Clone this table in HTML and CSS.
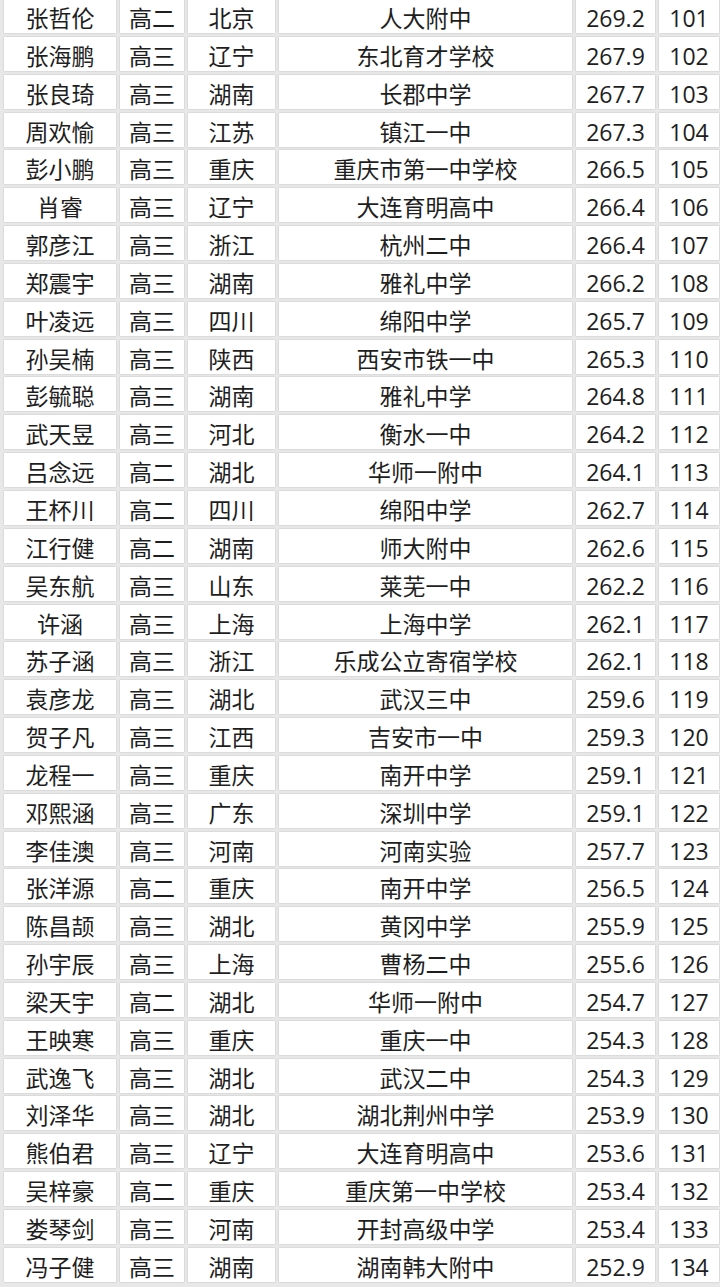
FILE: index.html
```html
<!DOCTYPE html>
<html lang="zh-CN">
<head>
<meta charset="utf-8">
<link rel="stylesheet" href="styles.css">
</head>
<body>
<div class="table">
<div class="row"><div class="c">张哲伦</div><div class="c">高二</div><div class="c">北京</div><div class="c">人大附中</div><div class="c">269.2</div><div class="c">101</div></div>
<div class="row"><div class="c">张海鹏</div><div class="c">高三</div><div class="c">辽宁</div><div class="c">东北育才学校</div><div class="c">267.9</div><div class="c">102</div></div>
<div class="row"><div class="c">张良琦</div><div class="c">高三</div><div class="c">湖南</div><div class="c">长郡中学</div><div class="c">267.7</div><div class="c">103</div></div>
<div class="row"><div class="c">周欢愉</div><div class="c">高三</div><div class="c">江苏</div><div class="c">镇江一中</div><div class="c">267.3</div><div class="c">104</div></div>
<div class="row"><div class="c">彭小鹏</div><div class="c">高三</div><div class="c">重庆</div><div class="c">重庆市第一中学校</div><div class="c">266.5</div><div class="c">105</div></div>
<div class="row"><div class="c">肖睿</div><div class="c">高三</div><div class="c">辽宁</div><div class="c">大连育明高中</div><div class="c">266.4</div><div class="c">106</div></div>
<div class="row"><div class="c">郭彦江</div><div class="c">高三</div><div class="c">浙江</div><div class="c">杭州二中</div><div class="c">266.4</div><div class="c">107</div></div>
<div class="row"><div class="c">郑震宇</div><div class="c">高三</div><div class="c">湖南</div><div class="c">雅礼中学</div><div class="c">266.2</div><div class="c">108</div></div>
<div class="row"><div class="c">叶凌远</div><div class="c">高三</div><div class="c">四川</div><div class="c">绵阳中学</div><div class="c">265.7</div><div class="c">109</div></div>
<div class="row"><div class="c">孙吴楠</div><div class="c">高三</div><div class="c">陕西</div><div class="c">西安市铁一中</div><div class="c">265.3</div><div class="c">110</div></div>
<div class="row"><div class="c">彭毓聪</div><div class="c">高三</div><div class="c">湖南</div><div class="c">雅礼中学</div><div class="c">264.8</div><div class="c">111</div></div>
<div class="row"><div class="c">武天昱</div><div class="c">高三</div><div class="c">河北</div><div class="c">衡水一中</div><div class="c">264.2</div><div class="c">112</div></div>
<div class="row"><div class="c">吕念远</div><div class="c">高二</div><div class="c">湖北</div><div class="c">华师一附中</div><div class="c">264.1</div><div class="c">113</div></div>
<div class="row"><div class="c">王杯川</div><div class="c">高二</div><div class="c">四川</div><div class="c">绵阳中学</div><div class="c">262.7</div><div class="c">114</div></div>
<div class="row"><div class="c">江行健</div><div class="c">高二</div><div class="c">湖南</div><div class="c">师大附中</div><div class="c">262.6</div><div class="c">115</div></div>
<div class="row"><div class="c">吴东航</div><div class="c">高三</div><div class="c">山东</div><div class="c">莱芜一中</div><div class="c">262.2</div><div class="c">116</div></div>
<div class="row"><div class="c">许涵</div><div class="c">高三</div><div class="c">上海</div><div class="c">上海中学</div><div class="c">262.1</div><div class="c">117</div></div>
<div class="row"><div class="c">苏子涵</div><div class="c">高三</div><div class="c">浙江</div><div class="c">乐成公立寄宿学校</div><div class="c">262.1</div><div class="c">118</div></div>
<div class="row"><div class="c">袁彦龙</div><div class="c">高三</div><div class="c">湖北</div><div class="c">武汉三中</div><div class="c">259.6</div><div class="c">119</div></div>
<div class="row"><div class="c">贺子凡</div><div class="c">高三</div><div class="c">江西</div><div class="c">吉安市一中</div><div class="c">259.3</div><div class="c">120</div></div>
<div class="row"><div class="c">龙程一</div><div class="c">高三</div><div class="c">重庆</div><div class="c">南开中学</div><div class="c">259.1</div><div class="c">121</div></div>
<div class="row"><div class="c">邓熙涵</div><div class="c">高三</div><div class="c">广东</div><div class="c">深圳中学</div><div class="c">259.1</div><div class="c">122</div></div>
<div class="row"><div class="c">李佳澳</div><div class="c">高三</div><div class="c">河南</div><div class="c">河南实验</div><div class="c">257.7</div><div class="c">123</div></div>
<div class="row"><div class="c">张洋源</div><div class="c">高二</div><div class="c">重庆</div><div class="c">南开中学</div><div class="c">256.5</div><div class="c">124</div></div>
<div class="row"><div class="c">陈昌颉</div><div class="c">高三</div><div class="c">湖北</div><div class="c">黄冈中学</div><div class="c">255.9</div><div class="c">125</div></div>
<div class="row"><div class="c">孙宇辰</div><div class="c">高三</div><div class="c">上海</div><div class="c">曹杨二中</div><div class="c">255.6</div><div class="c">126</div></div>
<div class="row"><div class="c">梁天宇</div><div class="c">高二</div><div class="c">湖北</div><div class="c">华师一附中</div><div class="c">254.7</div><div class="c">127</div></div>
<div class="row"><div class="c">王映寒</div><div class="c">高三</div><div class="c">重庆</div><div class="c">重庆一中</div><div class="c">254.3</div><div class="c">128</div></div>
<div class="row"><div class="c">武逸飞</div><div class="c">高三</div><div class="c">湖北</div><div class="c">武汉二中</div><div class="c">254.3</div><div class="c">129</div></div>
<div class="row"><div class="c">刘泽华</div><div class="c">高三</div><div class="c">湖北</div><div class="c">湖北荆州中学</div><div class="c">253.9</div><div class="c">130</div></div>
<div class="row"><div class="c">熊伯君</div><div class="c">高三</div><div class="c">辽宁</div><div class="c">大连育明高中</div><div class="c">253.6</div><div class="c">131</div></div>
<div class="row"><div class="c">吴梓豪</div><div class="c">高二</div><div class="c">重庆</div><div class="c">重庆第一中学校</div><div class="c">253.4</div><div class="c">132</div></div>
<div class="row"><div class="c">娄琴剑</div><div class="c">高三</div><div class="c">河南</div><div class="c">开封高级中学</div><div class="c">253.4</div><div class="c">133</div></div>
<div class="row"><div class="c">冯子健</div><div class="c">高三</div><div class="c">湖南</div><div class="c">湖南韩大附中</div><div class="c">252.9</div><div class="c">134</div></div>
</div>
</body>
</html>
```
FILE: styles.css
```css
html, body {
  margin: 0;
  padding: 0;
  background: #e8e8e8;
}
body {
  font-family: "Open Sans", "Noto Sans CJK SC", sans-serif;
  color: #1e1e1e;
  width: 720px;
  height: 1287px;
  overflow: hidden;
}
.table {
  display: flex;
  flex-direction: column;
  gap: 3.85px;
  margin-top: -1px;
  padding-left: 4px;
}
.row {
  display: grid;
  grid-template-columns: 112px 64px 87px 293px 79px 60px;
  column-gap: 4px;
  height: 34px;
}
.c {
  background: #fff;
  box-shadow: 0 0 1.5px rgba(0,0,0,0.22);
  text-align: center;
  font-size: 23px;
  line-height: 38px;
  white-space: nowrap;
  overflow: hidden;
}
```
